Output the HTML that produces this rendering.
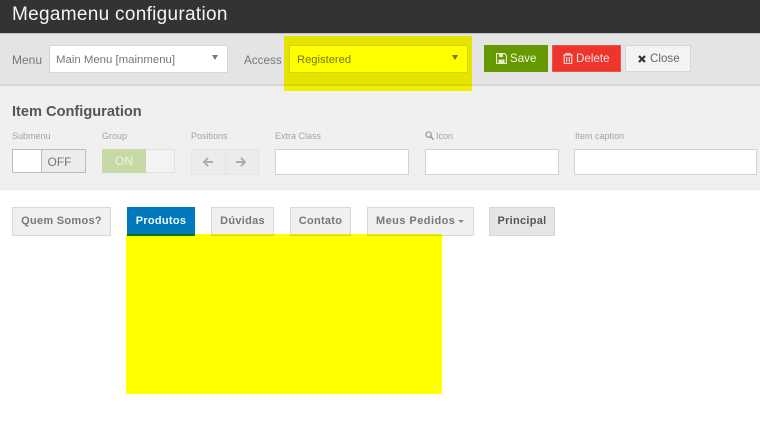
<!DOCTYPE html>
<html><head><meta charset="utf-8">
<style>
html,body{margin:0;padding:0;width:760px;height:426px;overflow:hidden;background:#fff}
body{position:relative;font-family:"Liberation Sans",sans-serif}
div,span.a{position:absolute;box-sizing:border-box;white-space:nowrap}
svg{position:absolute}
.lbl{font-size:9px;color:#a3a3a3;line-height:12px;top:130px}
.inp{background:#fff;border:1px solid #d2d2d2;top:149px;height:26px}
.tab{top:207px;height:29px;border:1px solid #d9d9d9;background:#f0f0f0;color:#777;font-size:11px;font-weight:bold;line-height:27px;text-align:center;letter-spacing:.28px}
.btn{top:45px;height:27px;font-size:11.6px;line-height:27px}
.y{background:#ff0;mix-blend-mode:multiply}
</style></head><body>
<div style="left:0;top:0;width:760px;height:33px;background:#333"></div>
<div style="left:12px;top:4px;font-size:19px;line-height:22px;color:#f4f4f4;letter-spacing:.3px">Megamenu configuration</div>
<div style="left:0;top:33px;width:760px;height:53px;background:#e4e4e4;border-top:1px solid #bdbdbd;border-bottom:2px solid #d6d6d6"></div>
<div style="left:0;top:86px;width:760px;height:104px;background:#f0f0f0;border-bottom:1px solid #e8e8e8"></div>

<div style="left:12px;top:53px;font-size:12px;line-height:14px;color:#777">Menu</div>
<div style="left:49px;top:45px;width:179px;height:28px;background:#fff;border:1px solid #d8d8d8"></div>
<div style="left:56px;top:53px;font-size:11.4px;line-height:14px;color:#777">Main Menu [mainmenu]</div>
<div style="left:212px;top:55px;width:0;height:0;border-left:3px solid transparent;border-right:3px solid transparent;border-top:5px solid #777"></div>
<div style="left:244px;top:54px;font-size:11.7px;line-height:14px;color:#777">Access</div>

<div style="left:289px;top:45px;width:179px;height:28px;background:#fff;border:1px solid #d8d8d8"></div>
<div style="left:297px;top:53px;font-size:11.2px;line-height:14px;color:#777">Registered</div>
<div style="left:452px;top:55px;width:0;height:0;border-left:3px solid transparent;border-right:3px solid transparent;border-top:5px solid #777"></div>
<div class="y" style="left:284px;top:36px;width:188px;height:55px"></div>

<div class="btn" style="left:484px;width:64px;background:#669900;color:#f0f5e0;padding-left:26px">Save</div>
<svg style="left:496px;top:53px" width="11" height="11" viewBox="0 0 11 11"><path d="M.5.5h8l2 2v8H.5z" fill="none" stroke="#e6efcc" stroke-width="1.2"/><path d="M3 1h4v3H3zM2.5 6.500h6V10h-6z" fill="#e6efcc"/></svg>
<div class="btn" style="left:552px;width:69px;background:#ee352c;border:1px solid #e8554e;color:#fde0e0;padding-left:23px;line-height:26px">Delete</div>
<svg style="left:563px;top:53px" width="10" height="11" viewBox="0 0 10 11"><path d="M0 2h10M3 2V.6h4V2M1.300 2.500v8h7.400v-8M3.700 4v5M6.300 4v5" fill="none" stroke="#fbd0d0" stroke-width="1.2"/></svg>
<div class="btn" style="left:625px;width:66px;background:#f3f3f3;border:1px solid #d8d8d8;color:#666;padding-left:24px;line-height:26px">Close</div>
<svg style="left:638px;top:55px" width="8" height="8" viewBox="0 0 8 8"><path d="M1 1l6 6M7 1L1 7" stroke="#333" stroke-width="2.2"/></svg>

<div style="left:12px;top:104px;font-size:14.6px;line-height:17px;font-weight:bold;color:#555">Item Configuration</div>

<div class="lbl" style="left:12px">Submenu</div>
<div style="left:12px;top:149px;width:74px;height:24px;border:1px solid #bcbcbc;background:#ececec"></div>
<div style="left:13px;top:150px;width:29px;height:22px;background:#fff;border-right:1px solid #bcbcbc"></div>
<div style="left:38px;top:150px;width:43px;height:22px;font-size:12px;line-height:24px;text-align:center;color:#777">OFF</div>

<div class="lbl" style="left:102px">Group</div>
<div style="left:102px;top:149px;width:73px;height:24px;border:1px solid #e0e0e0;background:#f3f3f3"></div>
<div style="left:102px;top:149px;width:44px;height:24px;background:#c7d9a5;font-size:12px;line-height:25px;text-align:center;color:#eef3e0">ON</div>

<div class="lbl" style="left:191px">Positions</div>
<div style="left:191px;top:149px;width:68px;height:26px;border:1px solid #e6e6e6;background:#ececec"></div>
<div style="left:225px;top:149px;width:1px;height:26px;background:#e3e3e3"></div>
<svg style="left:203px;top:157px" width="10" height="10" viewBox="0 0 10 10"><path d="M5 1L1 5l4 4M1.500 5H10" fill="none" stroke="#adadad" stroke-width="2"/></svg>
<svg style="left:236px;top:157px" width="10" height="10" viewBox="0 0 10 10"><path d="M5 1l4 4-4 4M8.500 5H0" fill="none" stroke="#adadad" stroke-width="2"/></svg>

<div class="lbl" style="left:275px">Extra Class</div>
<div class="inp" style="left:275px;width:134px"></div>
<svg style="left:425px;top:131px" width="9" height="9" viewBox="0 0 9 9"><circle cx="3.600" cy="3.600" r="2.700" fill="none" stroke="#999" stroke-width="1.300"/><path d="M5.600 5.600L8.500 8.500" stroke="#999" stroke-width="1.600"/></svg>
<div class="lbl" style="left:436px">Icon</div>
<div class="inp" style="left:425px;width:134px"></div>
<div class="lbl" style="left:575px">Item caption</div>
<div class="inp" style="left:574px;width:183px"></div>

<div class="tab" style="left:12px;width:99px">Quem Somos?</div>
<div class="tab" style="left:127px;width:68px;background:#0079bd;border-color:#0079bd;color:#f2f8fc">Produtos</div>
<div class="tab" style="left:211px;width:63px">Dúvidas</div>
<div class="tab" style="left:290px;width:61px">Contato</div>
<div class="tab" style="left:367px;width:107px;text-align:left;padding-left:8px;letter-spacing:.45px">Meus Pedidos</div>
<div style="left:458px;top:220px;width:0;height:0;border-left:3px solid transparent;border-right:3px solid transparent;border-top:3px solid #888"></div>
<div class="tab" style="left:489px;width:66px;background:#e5e5e5;border-color:#d6d6d6;color:#555">Principal</div>

<div class="y" style="left:126px;top:234px;width:316px;height:160px"></div>
</body></html>
